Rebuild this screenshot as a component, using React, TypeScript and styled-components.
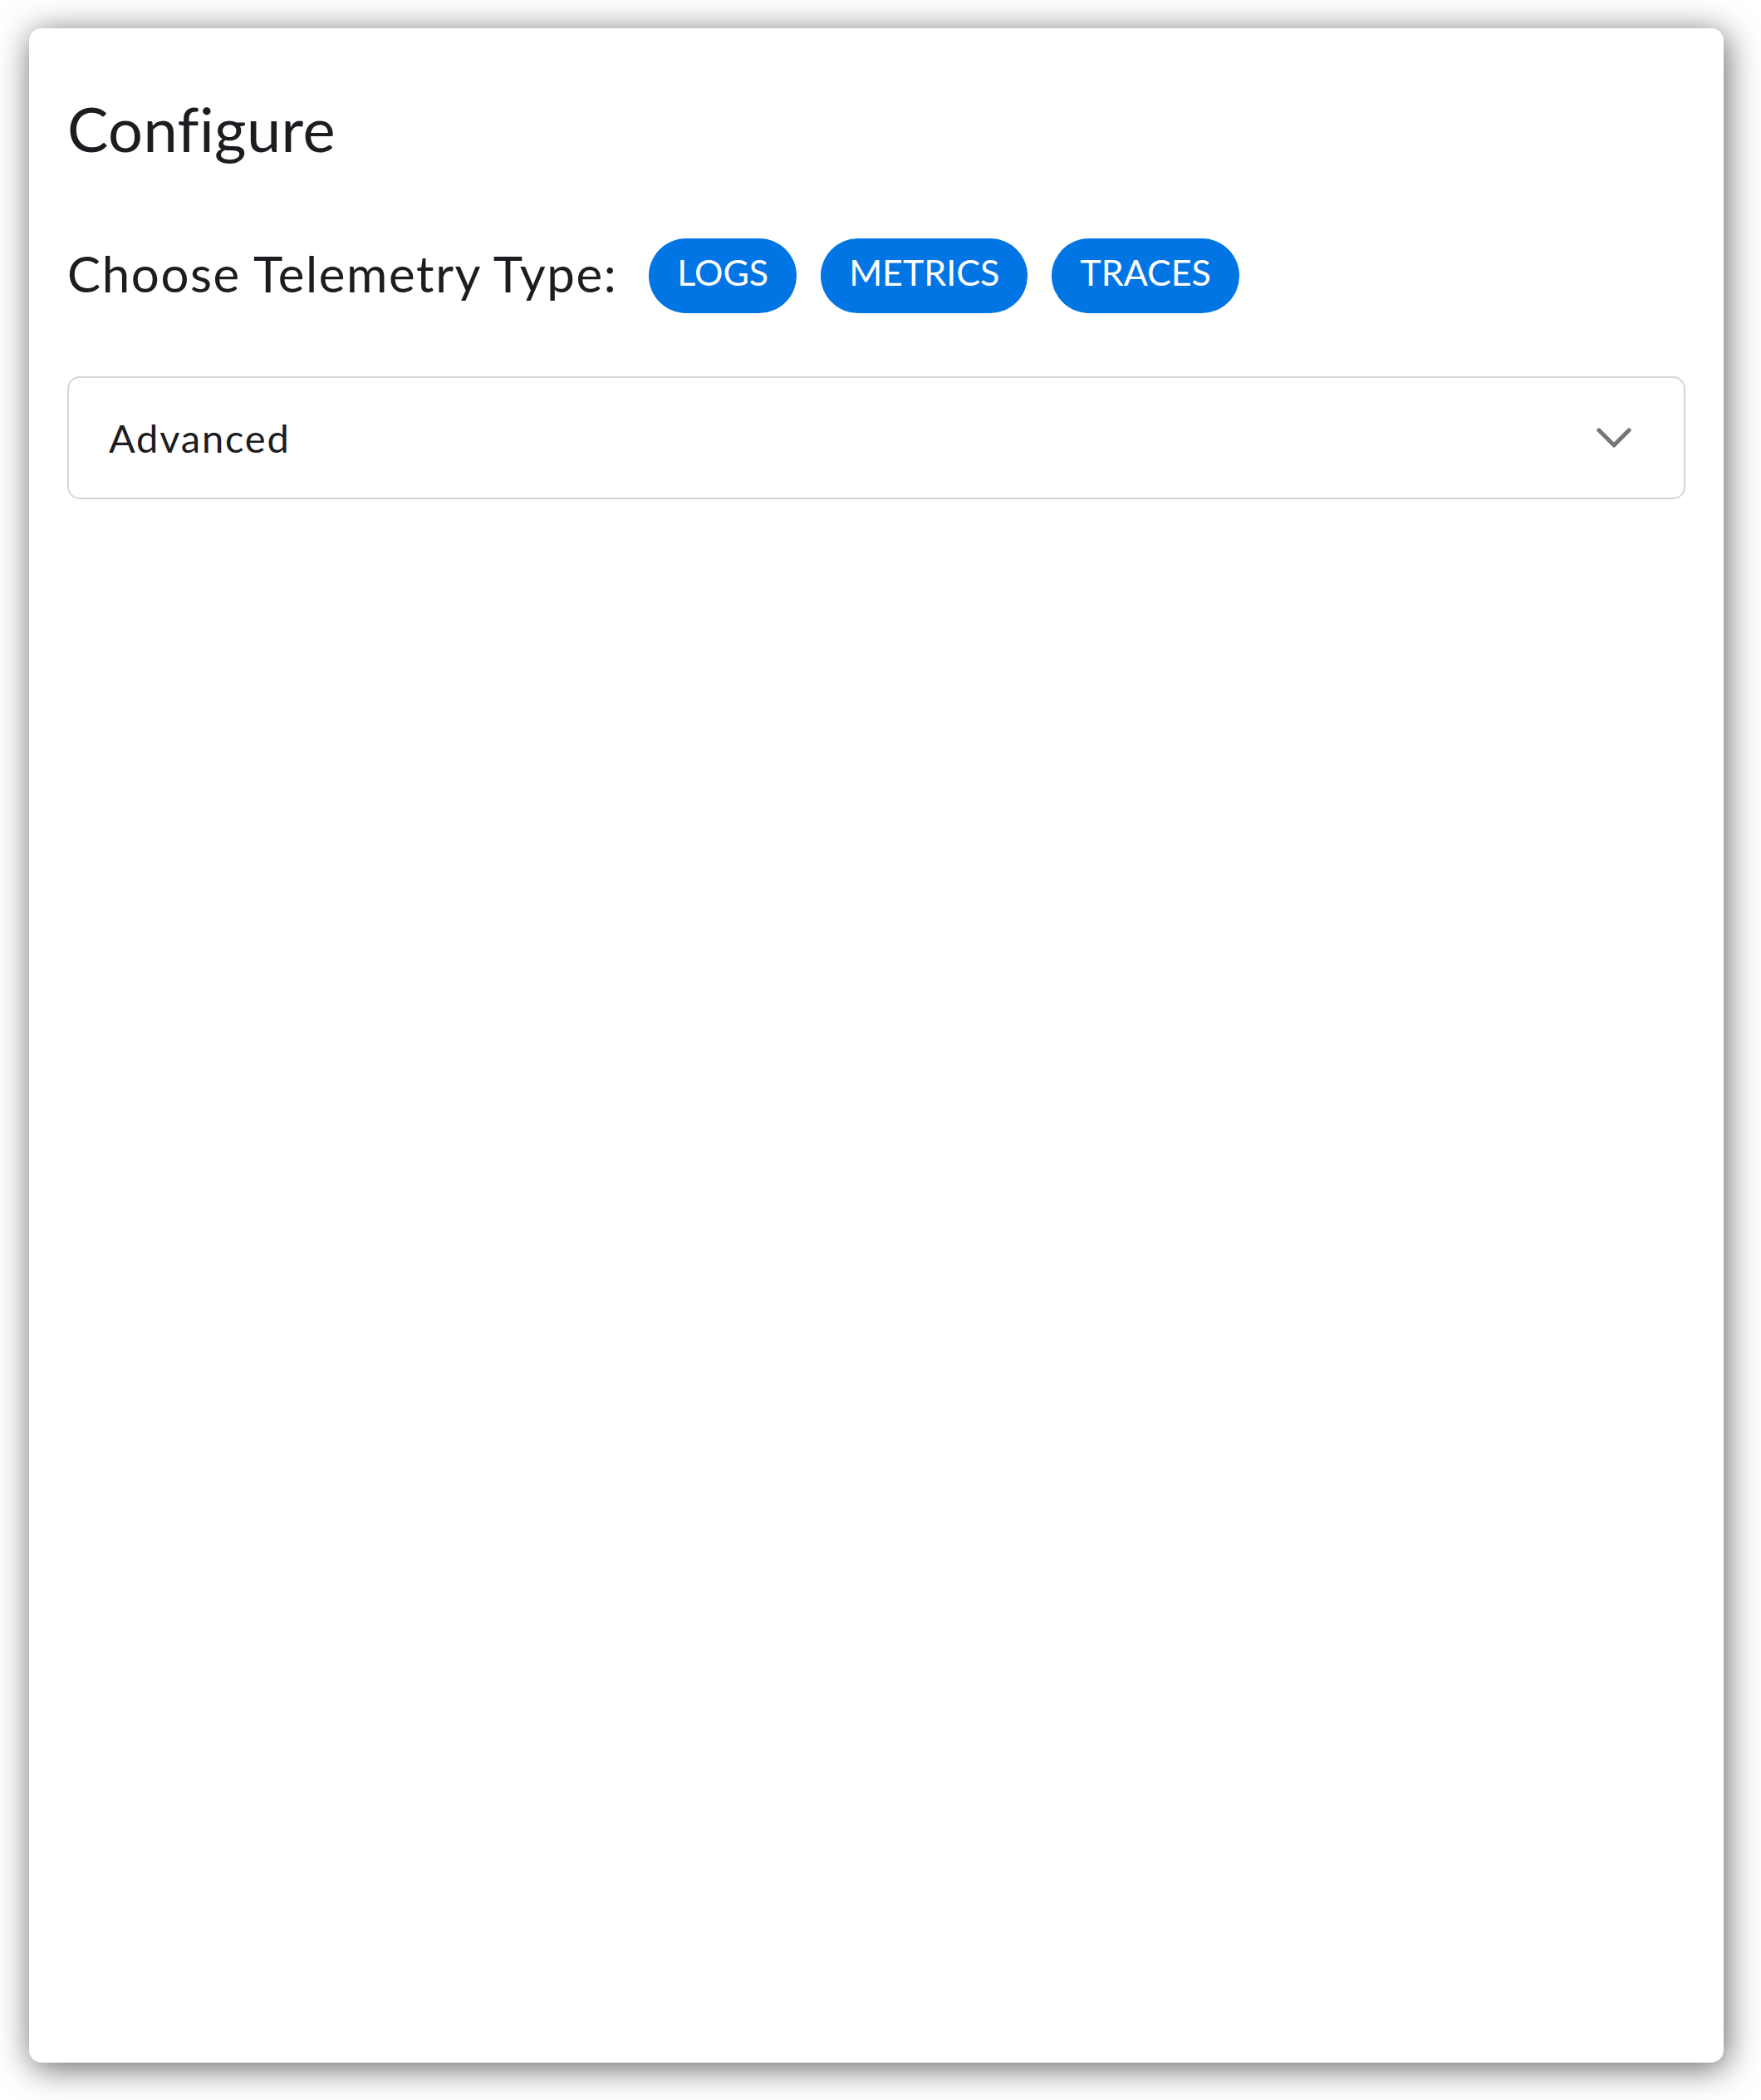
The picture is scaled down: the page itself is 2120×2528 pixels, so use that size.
import styled, { createGlobalStyle } from "styled-components";

const GlobalStyle = createGlobalStyle`
  html, body {
    margin: 0;
    padding: 0;
    background: #ffffff;
  }
  body {
    font-family: "Lato", "Open Sans", sans-serif;
    color: #1c1c21;
  }
`;

const Page = styled.div`
  box-sizing: border-box;
  min-height: 100vh;
  display: flex;
  flex-direction: column;
  padding: 34px 45px 45px 35px;
`;

const Card = styled.section`
  flex: 1;
  display: flex;
  flex-direction: column;
  padding: 76px 46px 46px;
  background: #ffffff;
  border-radius: 15px;
  box-shadow: 3px 6px 40px rgba(0, 0, 0, 0.62);
`;

const Title = styled.h1`
  margin: 0;
  font-size: 74px;
  line-height: 89px;
  font-weight: 400;
  letter-spacing: 0.4px;
  color: #1c1c21;
`;

const TypeRow = styled.div`
  display: flex;
  align-items: center;
  margin-top: 88px;
`;

const Label = styled.span`
  font-size: 60px;
  line-height: 72px;
  letter-spacing: 1.6px;
  margin: 0 38px 6px 0;
  color: #1c1c21;
`;

const Chips = styled.div`
  display: flex;
  gap: 29px;
`;

const Chip = styled.button`
  border: none;
  border-radius: 45px;
  background: #0175e4;
  color: #ffffff;
  font-family: inherit;
  font-size: 43px;
  line-height: 52px;
  padding: 15px 34px 23px;
  cursor: pointer;
`;

const Accordion = styled.div`
  margin-top: 76px;
  height: 148px;
  box-sizing: border-box;
  border: 2px solid #d6d6da;
  border-radius: 15px;
  display: flex;
  align-items: center;
  justify-content: space-between;
  padding: 0 63px 0 48px;
`;

const AccordionTitle = styled.span`
  font-size: 47px;
  line-height: 56px;
  letter-spacing: 1.8px;
  color: #1c1c21;
`;

function Chevron() {
  return (
    <svg width="42" height="24" viewBox="0 0 42 24" fill="none">
      <path
        d="M2.8 2.8 L21 21 L39.2 2.8"
        stroke="#757575"
        strokeWidth="5"
        strokeLinecap="round"
        strokeLinejoin="round"
      />
    </svg>
  );
}

const types = ["LOGS", "METRICS", "TRACES"];

export default function App() {
  return (
    <>
      <GlobalStyle />
      <Page>
        <Card>
          <Title>Configure</Title>
          <TypeRow>
            <Label>Choose Telemetry Type:</Label>
            <Chips>
              {types.map((t) => (
                <Chip key={t}>{t}</Chip>
              ))}
            </Chips>
          </TypeRow>
          <Accordion>
            <AccordionTitle>Advanced</AccordionTitle>
            <Chevron />
          </Accordion>
        </Card>
      </Page>
    </>
  );
}
